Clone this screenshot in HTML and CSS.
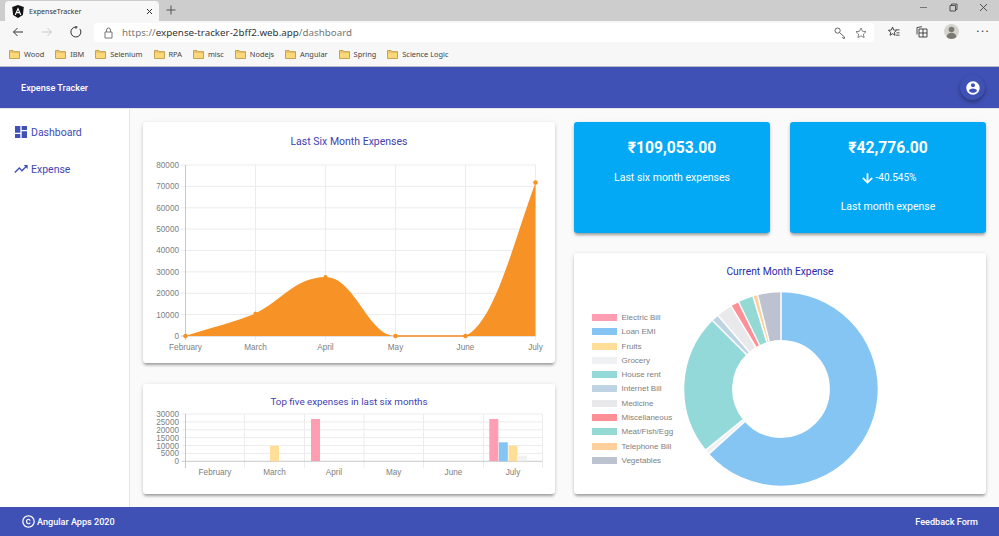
FILE: index.html
```html
<!DOCTYPE html>
<html lang="en">
<head>
    <meta charset="UTF-8">
    <meta name="viewport" content="width=device-width, initial-scale=1.0">
    <title>ExpenseTracker</title>
    <link rel="stylesheet" href="styles.css">
</head>
<body>
    <svg class="defs" width="0" height="0">
        <symbol id="folder" viewBox="0 0 11 10">
            <path d="M.5 1.5h3.6l1 1.2h5.4v6.8H.5z" fill="#fbd77a" stroke="#b8923a" stroke-width=".8"/>
            <path d="M.5 3h10" stroke="#c9a04a" stroke-width=".7"/>
        </symbol>
    </svg>

    <div class="tabstrip">
        <div class="tab">
            <svg class="tab-logo" width="12" height="13" viewBox="0 0 12 13">
                <path d="M6 0l5.8 2-.9 8L6 13l-4.9-3-.9-8z" fill="#111"/>
                <path d="M6 2.2L2.6 10h1.3l.7-1.8h2.8l.7 1.8h1.3zM5.1 7.1L6 4.9l.9 2.2z" fill="#fff"/>
            </svg>
            <span class="tab-title">ExpenseTracker</span>
            <svg class="tab-close" width="7" height="7" viewBox="0 0 7 7"><path d="M1 1l5 5M6 1L1 6" stroke="#333" stroke-width="1"/></svg>
        </div>
        <svg class="new-tab" width="10" height="10" viewBox="0 0 10 10"><path d="M5 .5v9M.5 5h9" stroke="#555" stroke-width="1"/></svg>
        <div class="window-controls">
            <svg width="9" height="9" viewBox="0 0 9 9"><path d="M1 4.5h7" stroke="#777" stroke-width="1"/></svg>
            <svg width="9" height="9" viewBox="0 0 9 9"><path d="M1 2.5h5.5v5.5H1zM2.5 2.5V1H8v5.500H6.500" fill="none" stroke="#444" stroke-width=".9"/></svg>
            <svg width="9" height="9" viewBox="0 0 9 9"><path d="M1 1l7 7M8 1L1 8" stroke="#444" stroke-width=".9"/></svg>
        </div>
    </div>

    <div class="toolbar">
        <svg class="nav-icon" width="12" height="12" viewBox="0 0 12 12"><path d="M11 6H1.500M5.500 2L1.500 6l4 4" fill="none" stroke="#333" stroke-width="1"/></svg>
        <svg class="nav-icon" width="12" height="12" viewBox="0 0 12 12"><path d="M1 6h9.500M6.500 2l4 4-4 4" fill="none" stroke="#c9c9c9" stroke-width="1"/></svg>
        <svg class="nav-icon" width="12" height="12" viewBox="0 0 12 12"><path d="M9.800 2.900A5 5 0 1 1 6 1H7.500M6 0v2.800" fill="none" stroke="#333" stroke-width="1"/></svg>
        <div class="address">
            <svg width="9" height="12" viewBox="0 0 9 12"><path d="M1 5h7v6H1zM2.500 5V3a2 2 0 0 1 4 0v2" fill="none" stroke="#777" stroke-width="1"/></svg>
            <span class="url">https://<b>expense-tracker-2bff2.web.app</b>/dashboard</span>
            <svg class="key" width="12" height="12" viewBox="0 0 12 12"><circle cx="3.600" cy="3.600" r="2.600" fill="none" stroke="#555" stroke-width=".9"/><path d="M5.500 5.500l5 4.500v1.300H9L8.500 10" fill="none" stroke="#555" stroke-width=".9"/></svg>
            <svg width="12" height="12" viewBox="0 0 12 12"><path d="M6 1l1.500 3.300 3.500.4-2.600 2.400.7 3.500L6 8.800l-3.100 1.800.7-3.500L1 4.700l3.500-.4z" fill="none" stroke="#666" stroke-width=".8"/></svg>
        </div>
        <svg class="tool-icon" width="12" height="12" viewBox="0 0 12 12"><path d="M4.500 1l1.200 3 3 .3-2.300 2 .7 3L4.500 7.700 2 9.300l.7-3-2.300-2 3-.3z" fill="none" stroke="#333" stroke-width=".9"/><path d="M8 3h3.500v1.400H8zM8.500 6h3v1.400h-3zM8 8.500h3.500V10H8z" fill="#888"/></svg>
        <svg class="tool-icon" width="12" height="12" viewBox="0 0 12 12"><path d="M3 3h8v8H3zM7 3v8M3 7h8M1 8.500V1.500l5-.8" fill="none" stroke="#333" stroke-width=".9"/></svg>
        <svg class="tool-icon" width="15" height="15" viewBox="0 0 15 15"><circle cx="7.500" cy="7.500" r="7.500" fill="#d5d3cf"/><circle cx="7.500" cy="5.500" r="2.800" fill="#7c7872"/><path d="M2.500 13c.6-3 2.600-4.200 5-4.200s4.400 1.200 5 4.200a7.500 7.500 0 0 1-10 0z" fill="#7c7872"/></svg>
        <span class="more">&middot;&middot;&middot;</span>
    </div>

    <div class="bookmarks">
        <a class="bookmark"><svg width="11" height="10"><use href="#folder"/></svg>Wood</a>
        <a class="bookmark"><svg width="11" height="10"><use href="#folder"/></svg>IBM</a>
        <a class="bookmark"><svg width="11" height="10"><use href="#folder"/></svg>Selenium</a>
        <a class="bookmark"><svg width="11" height="10"><use href="#folder"/></svg>RPA</a>
        <a class="bookmark"><svg width="11" height="10"><use href="#folder"/></svg>misc</a>
        <a class="bookmark"><svg width="11" height="10"><use href="#folder"/></svg>Nodejs</a>
        <a class="bookmark"><svg width="11" height="10"><use href="#folder"/></svg>Angular</a>
        <a class="bookmark"><svg width="11" height="10"><use href="#folder"/></svg>Spring</a>
        <a class="bookmark"><svg width="11" height="10"><use href="#folder"/></svg>Science Logic</a>
    </div>

    <header class="topbar">
        <span class="brand">Expense Tracker</span>
        <button class="account" type="button">
            <svg width="16" height="16" viewBox="0 0 24 24"><path fill="#fff" d="M12 2C6.480 2 2 6.480 2 12s4.480 10 10 10 10-4.480 10-10S17.520 2 12 2zm0 3c1.660 0 3 1.340 3 3s-1.340 3-3 3-3-1.340-3-3 1.340-3 3-3zm0 14.200c-2.500 0-4.710-1.280-6-3.220.03-1.990 4-3.080 6-3.080 1.990 0 5.970 1.090 6 3.080-1.290 1.940-3.500 3.220-6 3.220z"/></svg>
        </button>
    </header>

    <div class="main">
        <nav class="sidebar">
            <a class="nav-item">
                <svg width="16" height="16" viewBox="0 0 24 24"><path fill="#3f51b5" d="M3 13h8V3H3v10zm0 8h8v-6H3v6zm10 0h8V11h-8v10zm0-18v6h8V3h-8z"/></svg>
                Dashboard
            </a>
            <a class="nav-item">
                <svg width="16" height="16" viewBox="0 0 24 24"><path fill="#3f51b5" d="M16 6l2.290 2.290-4.880 4.880-4-4L2 16.590 3.410 18l6-6 4 4 6.300-6.290L22 12V6z"/></svg>
                Expense
            </a>
        </nav>

        <div class="content">
            <div class="column">
                <section class="card card-chart">
                    <h2 class="card-title">Last Six Month Expenses</h2>
                    <svg class="chart" width="412" height="214" viewBox="143 149 412 214">
                        <path class="grid" d="M181 165H535.500M181 186.400H535.500M181 207.800H535.500M181 229.100H535.500M181 250.500H535.500M181 271.900H535.500M181 293.300H535.500M181 314.600H535.500"/>
                        <path class="grid" d="M255.500 165V340M325.500 165V340M395.500 165V340M465.500 165V340M535.500 165V340"/>
                        <path class="axis" d="M185.500 165V340M181 336H535.500"/>
                        <path class="area" d="M185.500 336C210 328 235 322 255.500 313.500C282 300 295 277.500 325.500 277C355 277 368 336 395.500 336H465.500C495 322 513 243 535.500 182.500V336Z"/>
                        <path class="area-line" d="M395.500 336H465.500"/>
                        <g class="points">
                            <circle cx="185.500" cy="336" r="2.300"/>
                            <circle cx="255.500" cy="313.500" r="2"/>
                            <circle cx="325.500" cy="277" r="2"/>
                            <circle cx="395.500" cy="336" r="2.300"/>
                            <circle cx="465.500" cy="336" r="2.300"/>
                            <circle cx="535.500" cy="182.500" r="2.300"/>
                        </g>
                        <g class="tick tick-y">
                            <text x="179" y="168">80000</text>
                            <text x="179" y="189.300">70000</text>
                            <text x="179" y="210.700">60000</text>
                            <text x="179" y="232">50000</text>
                            <text x="179" y="253.400">40000</text>
                            <text x="179" y="274.800">30000</text>
                            <text x="179" y="296.200">20000</text>
                            <text x="179" y="317.500">10000</text>
                            <text x="179" y="339">0</text>
                        </g>
                        <g class="tick tick-x">
                            <text x="185.500" y="349.500">February</text>
                            <text x="255.500" y="349.500">March</text>
                            <text x="325.500" y="349.500">April</text>
                            <text x="395.500" y="349.500">May</text>
                            <text x="465.500" y="349.500">June</text>
                            <text x="535.500" y="349.500">July</text>
                        </g>
                    </svg>
                </section>

                <section class="card card-short">
                    <h2 class="card-title card-title-small">Top five expenses in last six months</h2>
                    <svg class="chart" width="412" height="85" viewBox="143 409 412 85">
                        <path class="grid" d="M182 414H542.500M182 421.900H542.500M182 429.800H542.500M182 437.600H542.500M182 445.500H542.500M182 453.400H542.500"/>
                        <path class="grid" d="M244.500 414V468M304.500 414V468M364 414V468M423.500 414V468M483.500 414V468M542.500 414V468"/>
                        <path class="axis" d="M185.500 414V468M182 461.300H542.500"/>
                        <rect class="bar-pink" x="311" y="419" width="9" height="42"/>
                        <rect class="bar-yellow" x="270" y="445.700" width="9" height="15.500"/>
                        <rect class="bar-pink" x="489.300" y="419" width="9" height="42"/>
                        <rect class="bar-blue" x="498.800" y="442.300" width="9" height="19"/>
                        <rect class="bar-yellow" x="508.500" y="445.700" width="9" height="15.500"/>
                        <rect class="bar-grey" x="518" y="455.700" width="9" height="5.500"/>
                        <g class="tick tick-y">
                            <text x="179" y="417">30000</text>
                            <text x="179" y="424.900">25000</text>
                            <text x="179" y="432.800">20000</text>
                            <text x="179" y="440.600">15000</text>
                            <text x="179" y="448.500">10000</text>
                            <text x="179" y="456.400">5000</text>
                            <text x="179" y="464.300">0</text>
                        </g>
                        <g class="tick tick-x">
                            <text x="215" y="475">February</text>
                            <text x="274.500" y="475">March</text>
                            <text x="334" y="475">April</text>
                            <text x="393.700" y="475">May</text>
                            <text x="453.500" y="475">June</text>
                            <text x="513" y="475">July</text>
                        </g>
                    </svg>
                </section>
            </div>

            <div class="column">
                <div class="stats">
                    <section class="stat-card">
                        <div class="stat-value">₹109,053.00</div>
                        <p class="stat-text">Last six month expenses</p>
                    </section>
                    <section class="stat-card">
                        <div class="stat-value">₹42,776.00</div>
                        <p class="stat-text stat-delta">
                            <svg width="15" height="15" viewBox="0 0 24 24"><path fill="#fff" stroke="#fff" stroke-width=".8" d="M20 12l-1.410-1.410L13 16.170V4h-2v12.170l-5.580-5.590L4 12l8 8 8-8z"/></svg>
                            -40.545%
                        </p>
                        <p class="stat-text">Last month expense</p>
                    </section>
                </div>

                <section class="card">
                    <h2 class="card-title card-title-dark">Current Month Expense</h2>
                    <div class="doughnut-body">
                        <ul class="legend">
                            <li><i class="swatch sw-electric"></i>Electric Bill</li>
                            <li><i class="swatch sw-loan"></i>Loan EMI</li>
                            <li><i class="swatch sw-fruits"></i>Fruits</li>
                            <li><i class="swatch sw-grocery"></i>Grocery</li>
                            <li><i class="swatch sw-house"></i>House rent</li>
                            <li><i class="swatch sw-internet"></i>Internet Bill</li>
                            <li><i class="swatch sw-medicine"></i>Medicine</li>
                            <li><i class="swatch sw-misc"></i>Miscellaneous</li>
                            <li><i class="swatch sw-meat"></i>Meat/Fish/Egg</li>
                            <li><i class="swatch sw-phone"></i>Telephone Bill</li>
                            <li><i class="swatch sw-veg"></i>Vegetables</li>
                        </ul>
                        <svg width="194" height="194" viewBox="-97 -97 194 194">
                            <g class="ring" transform="rotate(-90)">
                                <circle r="72.800" pathLength="360" stroke="#85c5f3" stroke-dasharray="228 132"/>
                                <circle r="72.800" pathLength="360" stroke="#f0f1f3" stroke-dasharray="3 357" transform="rotate(228)"/>
                                <circle r="72.800" pathLength="360" stroke="#94d9d9" stroke-dasharray="84 276" transform="rotate(231)"/>
                                <circle r="72.800" pathLength="360" stroke="#bfd4e2" stroke-dasharray="4.400 355.600" transform="rotate(315)"/>
                                <circle r="72.800" pathLength="360" stroke="#e9e9eb" stroke-dasharray="9.600 350.400" transform="rotate(319.400)"/>
                                <circle r="72.800" pathLength="360" stroke="#ff8f96" stroke-dasharray="5 355" transform="rotate(329)"/>
                                <circle r="72.800" pathLength="360" stroke="#94d9d4" stroke-dasharray="9.200 350.800" transform="rotate(334)"/>
                                <circle r="72.800" pathLength="360" stroke="#ffd09c" stroke-dasharray="2.800 357.200" transform="rotate(343.200)"/>
                                <circle r="72.800" pathLength="360" stroke="#bcc2d0" stroke-dasharray="14 346" transform="rotate(346)"/>
                            </g>
                            <g class="ring-gaps">
                                <path d="M0-49V-97" transform="rotate(0)"/>
                                <path d="M0-49V-97" transform="rotate(228)"/>
                                <path d="M0-49V-97" transform="rotate(231)"/>
                                <path d="M0-49V-97" transform="rotate(315)"/>
                                <path d="M0-49V-97" transform="rotate(319.400)"/>
                                <path d="M0-49V-97" transform="rotate(329)"/>
                                <path d="M0-49V-97" transform="rotate(334)"/>
                                <path d="M0-49V-97" transform="rotate(343.200)"/>
                                <path d="M0-49V-97" transform="rotate(346)"/>
                            </g>
                        </svg>
                    </div>
                </section>
            </div>
        </div>
    </div>

    <footer class="footer">
        <span class="footer-left">
            <svg width="15" height="15" viewBox="0 0 24 24"><path fill="#fff" d="M11.880 9.140c1.280.06 1.610 1.150 1.630 1.660h1.790c-.08-1.980-1.490-3.190-3.450-3.190C9.640 7.610 8 9 8 12.140c0 1.940.93 4.240 3.840 4.240 2.220 0 3.410-1.650 3.440-2.950h-1.790c-.03.590-.45 1.380-1.630 1.440-1.310-.04-1.860-1.060-1.860-2.730 0-2.890 1.280-2.980 1.880-3zM12 2C6.480 2 2 6.480 2 12s4.480 10 10 10 10-4.480 10-10S17.520 2 12 2zm0 18c-4.410 0-8-3.590-8-8s3.590-8 8-8 8 3.590 8 8-3.590 8-8 8z"/></svg>
            Angular Apps 2020
        </span>
        <span>Feedback Form</span>
    </footer>
</body>
</html>
```

FILE: styles.css
```css
* {
    box-sizing: border-box;
}
html, body {
    height: 100%;
}
body {
    margin: 0;
    overflow: hidden;
    display: flex;
    flex-direction: column;
    font-family: Roboto, "Liberation Sans", sans-serif;
    background: #fafafa;
}
.defs {
    position: absolute;
}

/* browser chrome */
.tabstrip {
    height: 21px;
    display: flex;
    align-items: flex-end;
    padding-left: 5px;
    background: #cdcdcd;
}
.tab {
    width: 154px;
    height: 20px;
    display: flex;
    align-items: center;
    padding: 0 6px 0 7px;
    background: #f7f7f7;
    border-radius: 4px 4px 0 0;
}
.tab-title {
    flex: 1;
    margin-left: 5px;
    font: 7.1px "Noto Sans", sans-serif;
    color: #333;
}
.new-tab {
    margin: 0 0 6px 7px;
}
.window-controls {
    margin-left: auto;
    align-self: flex-start;
    display: flex;
    gap: 21px;
    padding: 3px 11px 0 0;
}
.toolbar {
    height: 21px;
    display: flex;
    align-items: center;
    padding-left: 12px;
    background: #f7f7f7;
}
.nav-icon {
    margin-right: 17px;
}
.address {
    width: 780px;
    height: 19px;
    margin: 2px -2px 0 -5px;
    display: flex;
    align-items: center;
    gap: 9px;
    padding: 0 7px 0 10px;
    background: #fff;
    border-radius: 3px;
}
.url {
    flex: 1;
    font: 9.8px "Noto Sans", sans-serif;
    color: #777;
}
.url b {
    font-weight: normal;
    color: #333;
}
.tool-icon {
    margin-left: 16px;
}
.more {
    margin-left: 17px;
    font-size: 14px;
    letter-spacing: 1px;
    color: #444;
}
.bookmarks {
    height: 25px;
    display: flex;
    align-items: center;
    gap: 11px;
    padding-left: 9px;
    background: #f7f7f7;
    border-bottom: 1px solid #b9b9c4;
}
.bookmark {
    display: flex;
    align-items: center;
    gap: 4px;
    font: 7.4px "Noto Sans", sans-serif;
    color: #444;
}

/* app bars */
.topbar {
    height: 41px;
    flex: none;
    display: flex;
    align-items: center;
    justify-content: space-between;
    padding: 0 14px 0 21px;
    background: #3f51b5;
    color: #fff;
}
.brand {
    font-size: 9.1px;
    font-weight: 500;
}
.account {
    width: 25px;
    height: 25px;
    display: flex;
    align-items: center;
    justify-content: center;
    padding: 0;
    border: none;
    border-radius: 50%;
    background: #3f51b5;
    box-shadow: 0 2px 4px rgba(0, 0, 0, 0.35);
}
.main {
    flex: 1;
    min-height: 0;
    display: flex;
    border-top: 1px solid #e4e4ea;
}
.sidebar {
    width: 130px;
    flex: none;
    padding: 15px 0 0 13px;
    display: flex;
    flex-direction: column;
    gap: 21px;
    background: #fff;
    border-right: 1px solid #e6e6e6;
}
.nav-item {
    height: 16px;
    display: flex;
    align-items: center;
    gap: 2px;
    font-size: 10.5px;
    color: #3f48b5;
}
.content {
    flex: 1;
    display: grid;
    grid-template-columns: 412px 412px;
    column-gap: 19px;
    padding: 13px 0 0 13px;
}
.column {
    display: flex;
    flex-direction: column;
    gap: 21px;
}

/* cards */
.card {
    height: 241px;
    padding-top: 12px;
    background: #fff;
    border-radius: 3px;
    box-shadow: 0 3px 3px -1px rgba(0, 0, 0, 0.3), 0 1px 4px rgba(0, 0, 0, 0.15);
}
.card-chart {
    padding-top: 13px;
}
.card-short {
    height: 110px;
    padding-top: 11px;
}
.card-title {
    height: 14px;
    margin: 0;
    text-align: center;
    font-size: 10.5px;
    line-height: 14px;
    font-weight: 400;
    color: #3f3fb0;
}
.card-title-small {
    font-size: 9.8px;
}
.card-title-dark {
    font-size: 10.3px;
    color: #2b2ba8;
}
.chart {
    display: block;
}
.grid {
    fill: none;
    stroke: #ececec;
    stroke-width: 1;
}
.axis {
    fill: none;
    stroke: #c8c8c8;
    stroke-width: 1;
}
.area {
    fill: #f79226;
}
.area-line {
    stroke: #f79226;
    stroke-width: 1.5;
}
.points {
    fill: #f79226;
}
.tick {
    font: 8.2px "Liberation Sans", sans-serif;
    fill: #808080;
}
.tick-y {
    text-anchor: end;
}
.tick-x {
    text-anchor: middle;
}
.bar-pink {
    fill: #ff9db2;
}
.bar-yellow {
    fill: #ffdf98;
}
.bar-blue {
    fill: #85c5f3;
}
.bar-grey {
    fill: #f0f1f3;
}

/* stat cards */
.stats {
    display: flex;
    gap: 20px;
    margin-bottom: -1px;
}
.stat-card {
    width: 196px;
    height: 111px;
    padding-top: 16px;
    text-align: center;
    color: #fff;
    background: #03a9f4;
    border-radius: 3px;
    box-shadow: 0 3px 3px -1px rgba(0, 0, 0, 0.3), 0 1px 4px rgba(0, 0, 0, 0.15);
}
.stat-value {
    font-size: 15.7px;
    line-height: 20px;
    font-weight: 700;
}
.stat-text {
    height: 14px;
    margin: 13px 0 15px;
    font-size: 10.5px;
    line-height: 14px;
}
.stat-delta {
    display: flex;
    align-items: center;
    justify-content: center;
    gap: 1px;
    font-size: 10px;
}

/* doughnut */
.doughnut-body {
    display: flex;
    align-items: center;
    padding: 13px 0 0 18px;
}
.legend {
    width: 92px;
    margin: 0;
    padding: 0;
    list-style: none;
    font: 8px "Liberation Sans", sans-serif;
    color: #808080;
}
.legend li {
    height: 14.3px;
    display: flex;
    align-items: center;
    gap: 4.5px;
}
.swatch {
    width: 25px;
    height: 7px;
}
.sw-electric { background: #ff9db2; }
.sw-loan { background: #85c5f3; }
.sw-fruits { background: #ffdf98; }
.sw-grocery { background: #f0f1f3; }
.sw-house { background: #94d9d9; }
.sw-internet { background: #bfd4e2; }
.sw-medicine { background: #e9e9eb; }
.sw-misc { background: #ff8f96; }
.sw-meat { background: #94d9d4; }
.sw-phone { background: #ffd09c; }
.sw-veg { background: #bcc2d0; }
.ring circle {
    fill: none;
    stroke-width: 47.8;
}
.ring-gaps path {
    stroke: #fff;
    stroke-width: 1.5;
}

.footer {
    height: 29px;
    flex: none;
    display: flex;
    align-items: center;
    justify-content: space-between;
    padding: 0 21px;
    background: #3f51b5;
    color: #fff;
    font-size: 9.1px;
    font-weight: 500;
}
.footer-left {
    display: flex;
    align-items: center;
    gap: 1px;
}
```
